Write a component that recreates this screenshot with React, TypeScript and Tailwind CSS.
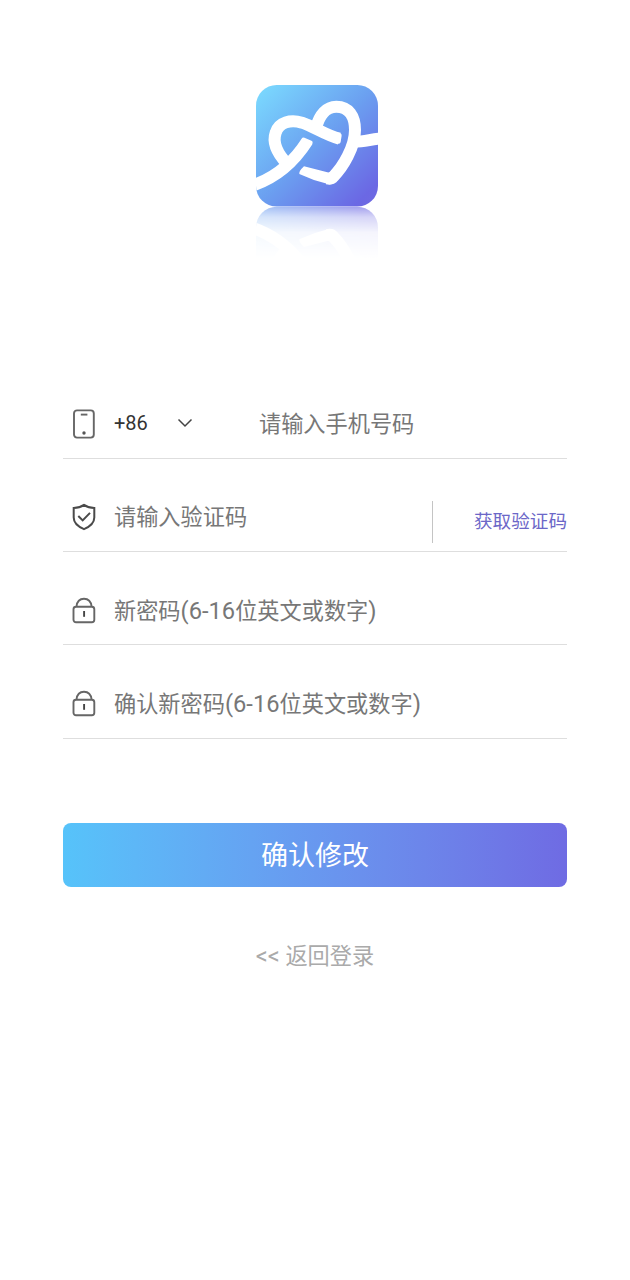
import { useState } from 'react';
import type { ReactNode } from 'react';

function LogoShape() {
  return (
    <g clipPath="url(#tile)">
      <rect x="48" y="45" width="366" height="365" fill="url(#tileFill)" />
      <g fill="none" stroke="#fff" strokeWidth="36" strokeLinejoin="round">
        <path d="M36 347C106 324 162 276 202 213" />
        <path d="M142 282C108 246 98 214 107 188C117 156 152 148 186 158C222 170 258 196 298 206" />
        <path d="M228 174C238 134 260 110 289 110C326 110 345 138 345 180C345 232 308 292 280 320Q274 328 262 325" />
        <path d="M340 215C370 216 395 207 420 206" />
      </g>
      <g fill="none" stroke="#fff" strokeWidth="12" strokeLinecap="round">
        <path d="M191 209L212 218" />
        <path d="M299 196L296 215" />
      </g>
      <path d="M192 289L262 307Q272 309 280 300L292 330Q280 346 264 342Q220 332 178 312Q176 304 192 289Z" fill="#fff" />
    </g>
  );
}

function Logo() {
  return (
    <svg className="w-[122px] h-[180px]" viewBox="48 45 366 540">
      <defs>
        <linearGradient id="tileFill" x1="0" y1="0" x2="1" y2="1">
          <stop offset="0" stopColor="#7bdcff" />
          <stop offset="0.5" stopColor="#6b9ff0" />
          <stop offset="0.9" stopColor="#6b68e4" />
          <stop offset="1" stopColor="#6f69e0" />
        </linearGradient>
        <linearGradient id="fade" gradientUnits="userSpaceOnUse" x1="0" y1="410" x2="0" y2="565">
          <stop offset="0" stopColor="#fff" stopOpacity="0.62" />
          <stop offset="0.2" stopColor="#fff" stopOpacity="0.28" />
          <stop offset="0.5" stopColor="#fff" stopOpacity="0.07" />
          <stop offset="1" stopColor="#fff" stopOpacity="0" />
        </linearGradient>
        <clipPath id="tile">
          <rect x="48" y="45" width="366" height="365" rx="62" />
        </clipPath>
        <mask id="reflection" maskUnits="userSpaceOnUse" x="48" y="410" width="366" height="175">
          <rect x="48" y="410" width="366" height="175" fill="url(#fade)" />
        </mask>
      </defs>
      <LogoShape />
      <g mask="url(#reflection)">
        <g transform="translate(0 820) scale(1 -1)">
          <LogoShape />
        </g>
      </g>
    </svg>
  );
}

function PhoneIcon() {
  return (
    <svg className="w-6 h-[30px]" viewBox="0 0 24 30" fill="none" stroke="#666" strokeWidth="1.9">
      <rect x="2" y="1.4" width="19.8" height="27.2" rx="3" />
      <path d="M8.8 5.6h6.6" />
      <circle cx="12" cy="24" r="1.7" fill="#555" stroke="none" />
    </svg>
  );
}

function ShieldIcon() {
  return (
    <svg className="w-6 h-[28px]" viewBox="0 0 24 28" fill="none" stroke="#4a4a4a" strokeWidth="2">
      <path d="M12 1.9C9 4 5.5 5 1.7 5V14.5C1.7 20 6.5 23.8 12 26.2C17.5 23.8 22.3 20 22.3 14.5V5C18.5 5 15 4 12 1.9Z" />
      <path d="M6.3 13L10.7 17.4L18 9.9" />
    </svg>
  );
}

function LockIcon() {
  return (
    <svg className="w-6 h-[28px]" viewBox="0 0 24 28" fill="none" stroke="#666" strokeWidth="1.9">
      <rect x="1.5" y="9.7" width="20.8" height="15.6" rx="2.5" />
      <path d="M4.5 9.5C5 4.5 8 1.7 12 1.7S19 4.5 19.6 9.5" />
      <path d="M12.1 14v5.8" stroke="#444" />
    </svg>
  );
}

type FieldProps = {
  type?: string;
  hint: ReactNode;
};

// the hint lies over the empty input, so digits can be sized apart from the Chinese text
function TextField({ type = 'text', hint }: FieldProps) {
  const [value, setValue] = useState('');

  return (
    <label className="relative ml-[18px] flex h-[42px] min-w-0 flex-1 items-center">
      <input
        type={type}
        value={value}
        onChange={(e) => setValue(e.target.value)}
        className="w-full bg-transparent text-[22.2px] text-[#333] outline-none"
      />
      {!value && (
        <span className="pointer-events-none absolute left-0 whitespace-nowrap text-[22.2px] leading-[42px] text-[#777]">{hint}</span>
      )}
    </label>
  );
}

function Latin({ children }: { children: ReactNode }) {
  return <span className="text-[23.7px]">{children}</span>;
}

export default function App() {
  return (
    <div className="min-h-screen bg-white px-[63px] pt-[85px] font-['Roboto','Noto_Sans_CJK_SC',sans-serif]">
      <div className="flex justify-center pl-1">
        <Logo />
      </div>

      <form className="mt-[124px]" onSubmit={(e) => e.preventDefault()}>
        <div className="grid grid-rows-[70px_93px_93px_94px]">
          <div className="flex items-center border-b border-[#dedede] pl-[9px]">
            <PhoneIcon />
            <button type="button" className="ml-[18px] flex w-[127px] items-center pb-[2px] text-[20px] leading-7 text-[#333]">
              +86
              <svg className="ml-[29px] h-[10px] w-4" viewBox="0 0 16 10" fill="none" stroke="#444" strokeWidth="1.5">
                <path d="M1.5 1.5L8 8L14.5 1.5" />
              </svg>
            </button>
            <TextField hint="请输入手机号码" />
          </div>

          <div className="flex items-end border-b border-[#dedede] pl-[9px] pb-2">
            <div className="flex flex-1 items-center pb-[5px]">
              <ShieldIcon />
              <TextField hint="请输入验证码" />
            </div>
            <div className="flex h-[42px] w-[135.5px] items-center justify-end border-l border-[#c4c4c4]">
              <button type="button" className="pt-[2px] text-[18.6px] text-[#6c67c8]">获取验证码</button>
            </div>
          </div>

          <div className="flex items-end border-b border-[#dedede] pl-[9px] pb-3">
            <div className="flex flex-1 items-center">
              <LockIcon />
              <TextField type="password" hint={<>新密码<Latin>(6-16</Latin>位英文或数字<Latin>)</Latin></>} />
            </div>
          </div>

          <div className="flex items-end border-b border-[#dedede] pl-[9px] pb-[13px]">
            <div className="flex flex-1 items-center">
              <LockIcon />
              <TextField type="password" hint={<>确认新密码<Latin>(6-16</Latin>位英文或数字<Latin>)</Latin></>} />
            </div>
          </div>
        </div>

        <button type="submit" className="mt-[84px] h-16 w-full rounded-lg bg-linear-to-r from-[#56c3fa] to-[#6f6be3] pt-[2px] text-[27px] text-white">
          确认修改
        </button>
      </form>

      <div className="mt-[52px] text-center">
        <a href="#" className="text-[22.2px] text-[#aaa]"><Latin>&lt;&lt;</Latin> 返回登录</a>
      </div>
    </div>
  );
}
